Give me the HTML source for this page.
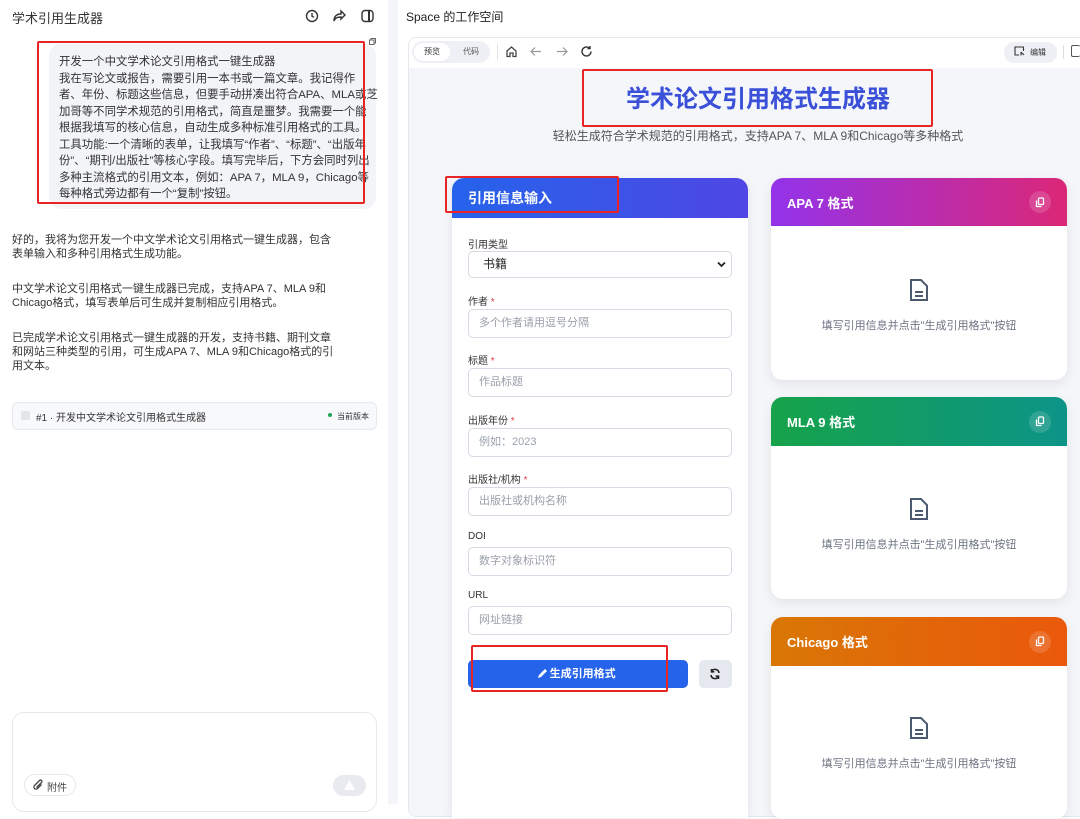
<!DOCTYPE html>
<html><head><meta charset="utf-8"><style>
*{box-sizing:border-box;margin:0;padding:0}
body{width:1080px;height:804px;overflow:hidden;background:#fff;font-family:"Liberation Sans","Noto Sans CJK SC",sans-serif;color:#222;position:relative}
.abs{position:absolute}
.left{left:0;top:0;width:388px;height:804px;background:#fff}
.sep{left:388px;top:0;width:10px;height:804px;background:#f4f5f9}
.right{left:398px;top:0;width:682px;height:804px;background:#fff}
.bubble{left:49px;top:44px;width:327px;height:165px;background:#f3f4f8;border-radius:12px;font-size:11.4px;line-height:16.5px;color:#333;padding:10px 2px 8px 10px;white-space:nowrap;overflow:visible}
.redbox{border:2px solid #e82424;border-radius:2px}
.p{font-size:11px;line-height:14px;color:#333;left:12px;width:340px;white-space:nowrap}
.frame{left:408px;top:37px;width:680px;height:780px;border:1px solid #e6e8ee;border-radius:8px;background:#f4f6f9;overflow:hidden}
.tb{height:30px;background:#fff}
.card{background:#fff;border-radius:12px;box-shadow:0 4px 12px rgba(0,0,0,.08);overflow:hidden}
.hd{height:48px;color:#fff;font-weight:bold;font-size:13px;padding:0 16px;display:flex;align-items:center;justify-content:space-between}
.cp{width:22px;height:22px;border-radius:50%;background:rgba(255,255,255,.15);display:flex;align-items:center;justify-content:center}
.lbl{font-size:10px;color:#333;left:468px}
.lbl b{color:#e53e3e;font-weight:normal}
.inp{left:468px;width:264px;height:29px;border:1px solid #d5dbe5;border-radius:5px;background:#fff;font-size:11px;color:#9aa0aa;padding:0 10px;line-height:27px}
.empty{text-align:center;font-size:11px;color:#6b7280}
</style></head><body>
<div class="abs left"></div>
<div class="abs sep"></div>
<div class="abs right"></div>

<div class="abs" style="left:12px;top:8px;font-size:13px;color:#333">学术引用生成器</div>
<svg class="abs" style="left:305px;top:9px" width="14" height="14" viewBox="0 0 14 14" fill="none" stroke="#333" stroke-width="1.4"><circle cx="7" cy="7" r="5.5"/><path d="M7 4v3.2l2 1"/></svg>
<svg class="abs" style="left:332px;top:9px" width="15" height="14" viewBox="0 0 15 14" fill="none" stroke="#333" stroke-width="1.4"><path d="M9 2l4 4-4 4V8C5 8 3 9 2 12c0-4 2-7 7-7z"/></svg>
<svg class="abs" style="left:361px;top:9px" width="13" height="14" viewBox="0 0 13 14" fill="none" stroke="#333" stroke-width="1.4"><rect x="1" y="1.5" width="11" height="11" rx="3"/><path d="M8 1.5v11" stroke-width="2"/></svg>
<svg class="abs" style="left:369px;top:38px" width="7" height="7" viewBox="0 0 7 7" fill="none" stroke="#666"><rect x="0.5" y="2" width="4.5" height="4.5"/><path d="M2 2V.5h4.5V5H5"/></svg>

<div class="abs bubble">开发一个中文学术论文引用格式一键生成器<br>我在写论文或报告，需要引用一本书或一篇文章。我记得作<br>者、年份、标题这些信息，但要手动拼凑出符合APA、MLA或芝<br>加哥等不同学术规范的引用格式，简直是噩梦。我需要一个能<br>根据我填写的核心信息，自动生成多种标准引用格式的工具。<br>工具功能:一个清晰的表单，让我填写“作者”、“标题”、“出版年<br>份”、“期刊/出版社”等核心字段。填写完毕后，下方会同时列出<br>多种主流格式的引用文本，例如：APA 7，MLA 9，Chicago等<br>每种格式旁边都有一个“复制”按钮。</div>
<div class="abs redbox" style="left:37px;top:41px;width:328px;height:163px"></div>

<div class="abs p" style="top:233px">好的，我将为您开发一个中文学术论文引用格式一键生成器，包含<br>表单输入和多种引用格式生成功能。</div>
<div class="abs p" style="top:282px">中文学术论文引用格式一键生成器已完成，支持APA 7、MLA 9和<br>Chicago格式，填写表单后可生成并复制相应引用格式。</div>
<div class="abs p" style="top:331px">已完成学术论文引用格式一键生成器的开发，支持书籍、期刊文章<br>和网站三种类型的引用，可生成APA 7、MLA 9和Chicago格式的引<br>用文本。</div>
<div class="abs" style="left:12px;top:402px;width:365px;height:28px;border:1px solid #e6e8ef;border-radius:6px;background:#f8f9fb"></div>
<div class="abs" style="left:21px;top:411px;width:9px;height:9px;background:#e4e5ea;border-radius:2px"></div>
<div class="abs" style="left:36px;top:409px;font-size:10px;color:#333">#1 · 开发中文学术论文引用格式生成器</div>
<div class="abs" style="left:328px;top:413px;width:4px;height:4px;border-radius:50%;background:#22a55a"></div>
<div class="abs" style="left:337px;top:411px;font-size:8px;color:#333">当前版本</div>

<div class="abs" style="left:12px;top:712px;width:365px;height:100px;border:1px solid #e8e9f0;border-radius:12px;background:#fff"></div>
<div class="abs" style="left:24px;top:774px;width:52px;height:22px;border:1px solid #e6e8ee;border-radius:11px;font-size:10px;color:#444;padding:4px 0 0 22px">附件</div>
<svg class="abs" style="left:33px;top:779px" width="11" height="12" viewBox="0 0 11 12" fill="none" stroke="#444" stroke-width="1.3"><path d="M8.5 5.5L4.5 9.5a2 2 0 01-3-3l5-5a1.4 1.4 0 012 2l-5 5"/></svg>
<div class="abs" style="left:333px;top:775px;width:33px;height:21px;border-radius:11px;background:#e8eaf0"></div>
<svg class="abs" style="left:344px;top:780px" width="11" height="10" viewBox="0 0 11 10"><path d="M5.5 0L11 10H0z" fill="#fff"/></svg>

<div class="abs" style="left:406px;top:8px;font-size:12px;color:#222">Space 的工作空间</div>

<div class="abs frame">
 <div class="tb"></div>
</div>
<div class="abs" style="left:412px;top:41px;width:78px;height:22px;border-radius:11px;background:#eef0f5"></div>
<div class="abs" style="left:414px;top:43px;width:36px;height:18px;border-radius:9px;background:#fff;font-size:8px;text-align:center;line-height:18px;color:#333">预览</div>
<div class="abs" style="left:456px;top:43px;width:30px;font-size:8px;text-align:center;line-height:18px;color:#555">代码</div>
<div class="abs" style="left:497px;top:44px;width:1px;height:16px;background:#e2e4ea"></div>
<svg class="abs" style="left:505px;top:45px" width="13" height="13" viewBox="0 0 13 13" fill="none" stroke="#444" stroke-width="1.3"><path d="M2 6L6.5 2 11 6v5.5H8V8H5v3.5H2z"/></svg>
<svg class="abs" style="left:530px;top:46px" width="12" height="11" viewBox="0 0 12 11" fill="none" stroke="#999" stroke-width="1.2"><path d="M11 5.5H1M5 1.5l-4 4 4 4"/></svg>
<svg class="abs" style="left:556px;top:46px" width="12" height="11" viewBox="0 0 12 11" fill="none" stroke="#999" stroke-width="1.2"><path d="M1 5.5h10M7 1.5l4 4-4 4"/></svg>
<svg class="abs" style="left:580px;top:45px" width="13" height="13" viewBox="0 0 13 13" fill="none" stroke="#333" stroke-width="1.4"><path d="M11 6.5a4.5 4.5 0 11-1.4-3.3M10 1v2.5H7.5"/></svg>
<div class="abs" style="left:1004px;top:42px;width:53px;height:21px;border-radius:10px;background:#eef0f5;font-size:8px;color:#333;padding:5px 0 0 26px">编辑</div>
<svg class="abs" style="left:1014px;top:46px" width="11" height="11" viewBox="0 0 11 11" fill="none" stroke="#333" stroke-width="1.1"><path d="M9.5 5V1H1v8h4M7 6l3 3M7 6v3.5"/></svg>
<div class="abs" style="left:1063px;top:45px;width:1px;height:14px;background:#ddd"></div>
<div class="abs" style="left:1071px;top:45px;width:9px;height:12px;border:1.2px solid #555;border-radius:2px;border-right:none"></div>

<div class="abs" style="left:408px;top:84px;width:700px;text-align:center;font-size:24px;line-height:32px;font-weight:bold;color:#3b50d8">学术论文引用格式生成器</div>
<div class="abs redbox" style="left:582px;top:69px;width:351px;height:58px"></div>
<div class="abs" style="left:408px;top:127px;width:700px;text-align:center;font-size:12px;color:#555">轻松生成符合学术规范的引用格式，支持APA 7、MLA 9和Chicago等多种格式</div>

<div class="abs card" style="left:452px;top:178px;width:296px;height:640px;border-radius:12px 12px 0 0">
 <div class="hd" style="height:40px;background:linear-gradient(90deg,#2563eb,#4f46e5);font-size:14px">引用信息输入</div>
</div>
<div class="abs redbox" style="left:445px;top:176px;width:174px;height:37px"></div>

<div class="abs lbl" style="top:236px">引用类型</div>
<div class="abs inp" style="top:251px;height:27px;color:#222;font-size:12px;line-height:25px;padding-left:14px">书籍</div>
<svg class="abs" style="left:717px;top:261px" width="9" height="7" viewBox="0 0 9 7" fill="none" stroke="#222" stroke-width="1.8"><path d="M1 1.5l3.5 3.5L8 1.5"/></svg>
<div class="abs lbl" style="top:293px">作者 <b>*</b></div>
<div class="abs inp" style="top:309px">多个作者请用逗号分隔</div>
<div class="abs lbl" style="top:352px">标题 <b>*</b></div>
<div class="abs inp" style="top:368px">作品标题</div>
<div class="abs lbl" style="top:412px">出版年份 <b>*</b></div>
<div class="abs inp" style="top:428px">例如：2023</div>
<div class="abs lbl" style="top:471px">出版社/机构 <b>*</b></div>
<div class="abs inp" style="top:487px">出版社或机构名称</div>
<div class="abs lbl" style="top:531px">DOI</div>
<div class="abs inp" style="top:547px">数字对象标识符</div>
<div class="abs lbl" style="top:590px">URL</div>
<div class="abs inp" style="top:606px">网址链接</div>

<div class="abs" style="left:468px;top:660px;width:220px;height:28px;border-radius:5px;background:#2563eb;color:#fff;font-size:11px;font-weight:bold;text-align:center;line-height:28px">&nbsp;&nbsp;&nbsp;生成引用格式</div>
<svg class="abs" style="left:536px;top:668px" width="12" height="12" viewBox="0 0 12 12"><path d="M2 10l1-3 6-6 2 2-6 6z" fill="#fff"/></svg>
<div class="abs redbox" style="left:471px;top:645px;width:197px;height:47px"></div>
<div class="abs" style="left:699px;top:660px;width:33px;height:28px;border-radius:5px;background:#e5e8ee"></div>
<svg class="abs" style="left:709px;top:668px" width="12" height="12" viewBox="0 0 12 12" fill="none" stroke="#222" stroke-width="1.6"><path d="M10 5A4 4 0 002.5 3.5M2 7a4 4 0 007.5 1.5M2.5 1v2.8h2.8M9.5 11V8.2H6.7"/></svg>

<div class="abs card" style="left:771px;top:178px;width:296px;height:202px">
 <div class="hd" style="background:linear-gradient(90deg,#9333ea,#db2777)">APA 7 格式<div class="cp"><svg width="10" height="11" viewBox="0 0 10 11" fill="none" stroke="#fff" stroke-width="1.3"><rect x="3.5" y="1" width="5" height="6.5" rx="1"/><path d="M1.5 3.5v6h5"/></svg></div></div>
 <svg style="position:absolute;left:138px;top:100px" width="20" height="24" viewBox="0 0 20 24" fill="none" stroke="#4b5a6e" stroke-width="2"><path d="M2 2h10l6 6v14H2z"/><path d="M6 14h8M6 18h8"/></svg>
 <div class="empty" style="position:absolute;top:139px;width:100%">填写引用信息并点击"生成引用格式"按钮</div>
</div>
<div class="abs card" style="left:771px;top:397px;width:296px;height:202px">
 <div class="hd" style="height:49px;background:linear-gradient(90deg,#16a34a,#0d9488)">MLA 9 格式<div class="cp"><svg width="10" height="11" viewBox="0 0 10 11" fill="none" stroke="#fff" stroke-width="1.3"><rect x="3.5" y="1" width="5" height="6.5" rx="1"/><path d="M1.5 3.5v6h5"/></svg></div></div>
 <svg style="position:absolute;left:138px;top:100px" width="20" height="24" viewBox="0 0 20 24" fill="none" stroke="#4b5a6e" stroke-width="2"><path d="M2 2h10l6 6v14H2z"/><path d="M6 14h8M6 18h8"/></svg>
 <div class="empty" style="position:absolute;top:139px;width:100%">填写引用信息并点击"生成引用格式"按钮</div>
</div>
<div class="abs card" style="left:771px;top:617px;width:296px;height:202px">
 <div class="hd" style="height:49px;background:linear-gradient(90deg,#d97706,#ea580c)">Chicago 格式<div class="cp"><svg width="10" height="11" viewBox="0 0 10 11" fill="none" stroke="#fff" stroke-width="1.3"><rect x="3.5" y="1" width="5" height="6.5" rx="1"/><path d="M1.5 3.5v6h5"/></svg></div></div>
 <svg style="position:absolute;left:138px;top:99px" width="20" height="24" viewBox="0 0 20 24" fill="none" stroke="#4b5a6e" stroke-width="2"><path d="M2 2h10l6 6v14H2z"/><path d="M6 14h8M6 18h8"/></svg>
 <div class="empty" style="position:absolute;top:138px;width:100%">填写引用信息并点击"生成引用格式"按钮</div>
</div>
</body></html>
